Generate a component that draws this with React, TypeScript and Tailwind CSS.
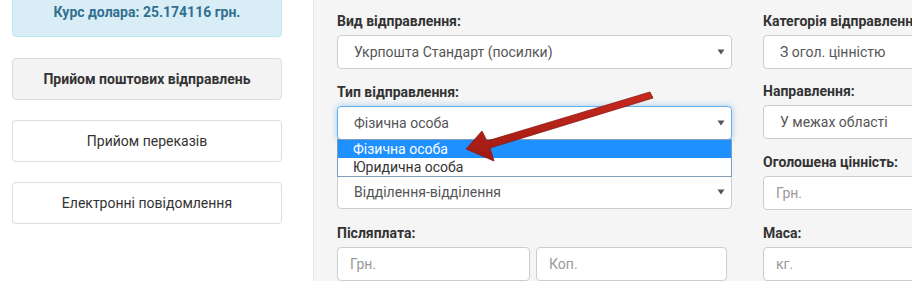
import React from "react";

const Caret = () => (
  <svg width="8" height="6" viewBox="0 0 8 6" className="absolute right-[6px] top-1/2 -translate-y-1/2">
    <path d="M0.5 0.5 L7.5 0.5 L4 5.5 Z" fill="#555" />
  </svg>
);

const Label = ({ children }: { children: React.ReactNode }) => (
  <div className="h-[20px] mb-[5px] text-[14px] leading-[22px] font-bold text-[#333] whitespace-nowrap">{children}</div>
);

const Select = ({ text, focus }: { text: string; focus?: boolean }) => (
  <div
    className={`relative h-[34px] rounded-[4px] bg-white border pl-[16px] text-[14px] leading-[32px] text-[#555] whitespace-nowrap ${
      focus ? "border-[#66afe9] shadow-[0_0_6px_rgba(102,175,233,0.6)]" : "border-[#ccc]"
    }`}
  >
    {text}
    <Caret />
  </div>
);

const Input = ({ ph, w }: { ph: string; w?: string }) => (
  <div className={`h-[34px] rounded-[4px] bg-white border border-[#ccc] pl-[12px] text-[14px] leading-[32px] text-[#999] whitespace-nowrap ${w ?? ""}`}>
    {ph}
  </div>
);

export default function App() {
  return (
    <div className="relative w-[912px] h-[281px] overflow-hidden bg-white flex" style={{ fontFamily: "Roboto, 'Noto Sans', sans-serif" }}>
      {/* Sidebar */}
      <div className="w-[313px] shrink-0 px-[12px] flex flex-col">
        <div className="-mt-[13px] h-[50px] w-[270px] rounded-[4px] bg-[#d9edf7] border border-[#bce8f1] flex items-center justify-center text-[14px] font-bold text-[#31708f]">
          Курс долара: 25.174116 грн.
        </div>
        <div className="mt-[21px] h-[42px] w-[270px] rounded-[4px] bg-[#f3f3f3] border border-[#ddd] flex items-center justify-center text-[14px] font-bold text-[#333]">
          Прийом поштових відправлень
        </div>
        <div className="mt-[20px] h-[42px] w-[270px] rounded-[4px] bg-white border border-[#ddd] flex items-center justify-center text-[14px] text-[#333]">
          Прийом переказів
        </div>
        <div className="mt-[20px] h-[42px] w-[270px] rounded-[4px] bg-white border border-[#ddd] flex items-center justify-center text-[14px] text-[#333]">
          Електронні повідомлення
        </div>
      </div>

      {/* Main panel */}
      <div className="flex-1 bg-[#f5f5f5] border-l border-[#e5e5e5] pl-[23px] pt-[10px] flex gap-[31px]">
        <div className="w-[395px] shrink-0 flex flex-col">
          <Label>Вид відправлення:</Label>
          <Select text="Укрпошта Стандарт (посилки)" />
          <div className="h-[13px]" />
          <Label>Тип відправлення:</Label>
          <div className="relative">
            <Select text="Фізична особа" focus />
            <div className="absolute left-0 right-0 top-[33px] z-10 bg-white border border-[#7f9db9] text-[14px] leading-[18px] text-[#333]">
              <div className="bg-[#1e90ff] text-white pl-[15px] h-[18px] leading-[19px]">Фізична особа</div>
              <div className="pl-[15px] h-[18px] leading-[19px]">Юридична особа</div>
            </div>
          </div>
          <div className="h-[13px]" />
          <div className="h-[20px] mb-[5px]" />
          <Select text="Відділення-відділення" />
          <div className="h-[14px]" />
          <Label>Післяплата:</Label>
          <div className="flex gap-[6px]">
            <Input ph="Грн." w="w-[193px]" />
            <Input ph="Коп." w="w-[191px]" />
          </div>
        </div>
        <div className="w-[395px] shrink-0 flex flex-col">
          <Label>Категорія відправлення:</Label>
          <Select text="З огол. цінністю" />
          <div className="h-[13px]" />
          <Label>Направлення:</Label>
          <Select text="У межах області" />
          <div className="h-[13px]" />
          <Label>Оголошена цінність:</Label>
          <Input ph="Грн." />
          <div className="h-[14px]" />
          <Label>Маса:</Label>
          <Input ph="кг." />
        </div>
      </div>

      {/* Arrow annotation */}
      <svg className="absolute left-0 top-0 z-20 pointer-events-none" width="912" height="281" viewBox="0 0 912 281">
        <defs>
          <linearGradient id="ag" x1="0" y1="0" x2="0" y2="1">
            <stop offset="0" stopColor="#c8291e" />
            <stop offset="1" stopColor="#9e1a12" />
          </linearGradient>
        </defs>
        <polygon
          points="466,149 482,131 487,141 650,92 653,98 490,148 494,161"
          fill="url(#ag)"
          stroke="#8a160f"
          strokeWidth="0.8"
          strokeLinejoin="round"
        />
      </svg>
    </div>
  );
}
